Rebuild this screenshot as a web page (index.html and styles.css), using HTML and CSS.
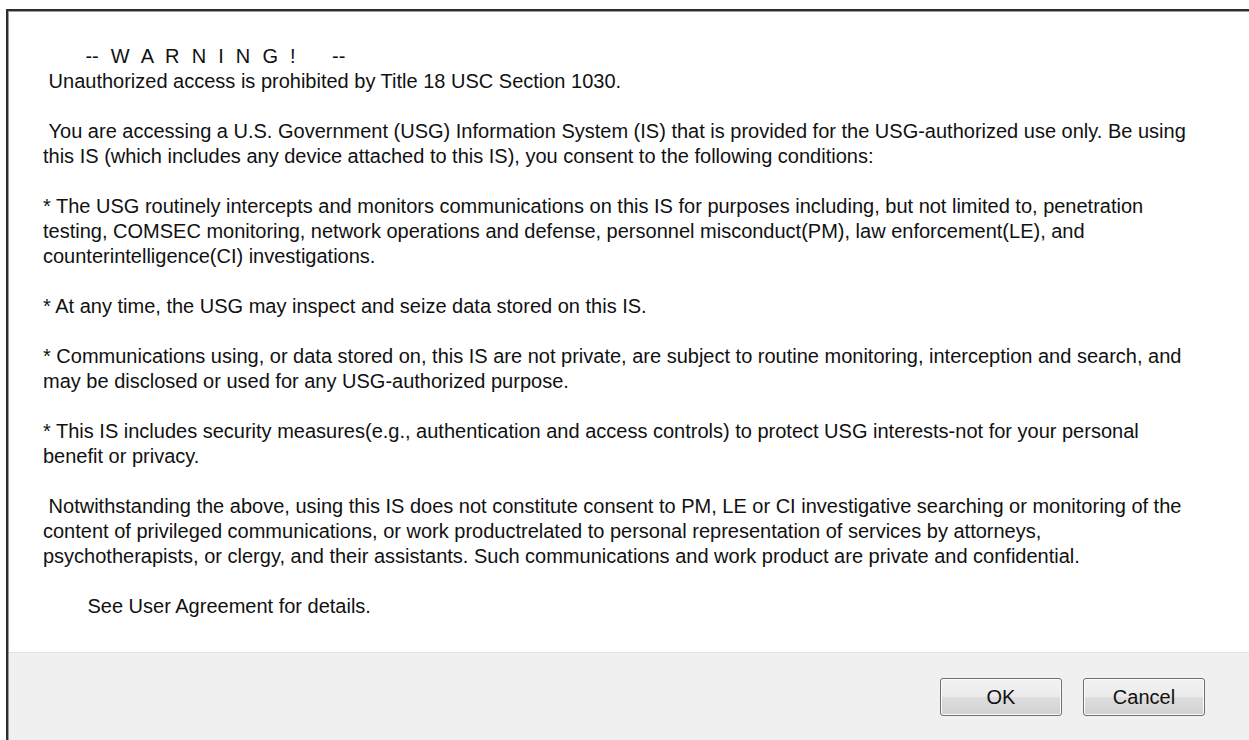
FILE: index.html
```html
<!DOCTYPE html>
<html lang="en">
<head>
<meta charset="utf-8">
<title>Notice</title>
<link rel="stylesheet" href="styles.css">
</head>
<body>
<div class="dialog">
  <div class="dialog-body">
    <div class="notice-text"><span class="notice-title">       --  W  A  R  N  I  N  G  !      --</span>
 Unauthorized access is prohibited by Title 18 USC Section 1030.

 You are accessing a U.S. Government (USG) Information System (IS) that is provided for the USG-authorized use only. Be using this IS (which includes any device attached to this IS), you consent to the following conditions:

* The USG routinely intercepts and monitors communications on this IS for purposes including, but not limited to, penetration testing, COMSEC monitoring, network operations and defense, personnel misconduct(PM), law enforcement(LE), and counterintelligence(CI) investigations.

* At any time, the USG may inspect and seize data stored on this IS.

* Communications using, or data stored on, this IS are not private, are subject to routine monitoring, interception and search, and may be disclosed or used for any USG-authorized purpose.

* This IS includes security measures(e.g., authentication and access controls) to protect USG interests-not for your personal benefit or privacy.

 Notwithstanding the above, using this IS does not constitute consent to PM, LE or CI investigative searching or monitoring of the content of privileged communications, or work productrelated to personal representation of services by attorneys, psychotherapists, or clergy, and their assistants. Such communications and work product are private and confidential.

        See User Agreement for details.</div>
  </div>
  <div class="dialog-footer">
    <button class="btn" type="button">OK</button>
    <button class="btn" type="button">Cancel</button>
  </div>
</div>
</body>
</html>
```
FILE: styles.css
```css
html, body {
  margin: 0;
  padding: 0;
  background: #ffffff;
  overflow: hidden;
}

body {
  font-family: "Liberation Sans", Arial, sans-serif;
  font-size: 20px;
  color: #111111;
}

/* outer frame: only the top and left edges fall inside the window */
.dialog {
  margin: 9px 0 0 6px;
  border-style: solid;
  border-color: #2e2e2e;
  border-width: 2px 0 0 2px;
  box-shadow: inset 1px 1px 0 #9c9c9c;
  padding: 1px 0 0 1px;
  background: #ffffff;
}

.dialog-body {
  padding: 32px 0 33px 34px;
}

.notice-text {
  width: 1156px;
  white-space: pre-wrap;
  line-height: 25px;
}

/* spaced-out heading line */
.notice-title {
  word-spacing: 0.5px;
}

.dialog-footer {
  display: flex;
  justify-content: flex-end;
  gap: 21px;
  height: 88px;
  box-sizing: border-box;
  padding: 25px 44px 0 0;
  background: #f0f0f0;
  border-top: 1px solid #e2e2e2;
}

.btn {
  width: 122px;
  height: 38px;
  box-sizing: border-box;
  font-family: "Liberation Sans", Arial, sans-serif;
  font-size: 20px;
  color: #111111;
  border: 1px solid #707070;
  border-radius: 3px;
  background: linear-gradient(#f2f2f2 0%, #ebebeb 48%, #dddddd 52%, #d2d2d2 100%);
  box-shadow: inset 0 0 0 1px #fbfbfb;
  padding: 0;
}
```
